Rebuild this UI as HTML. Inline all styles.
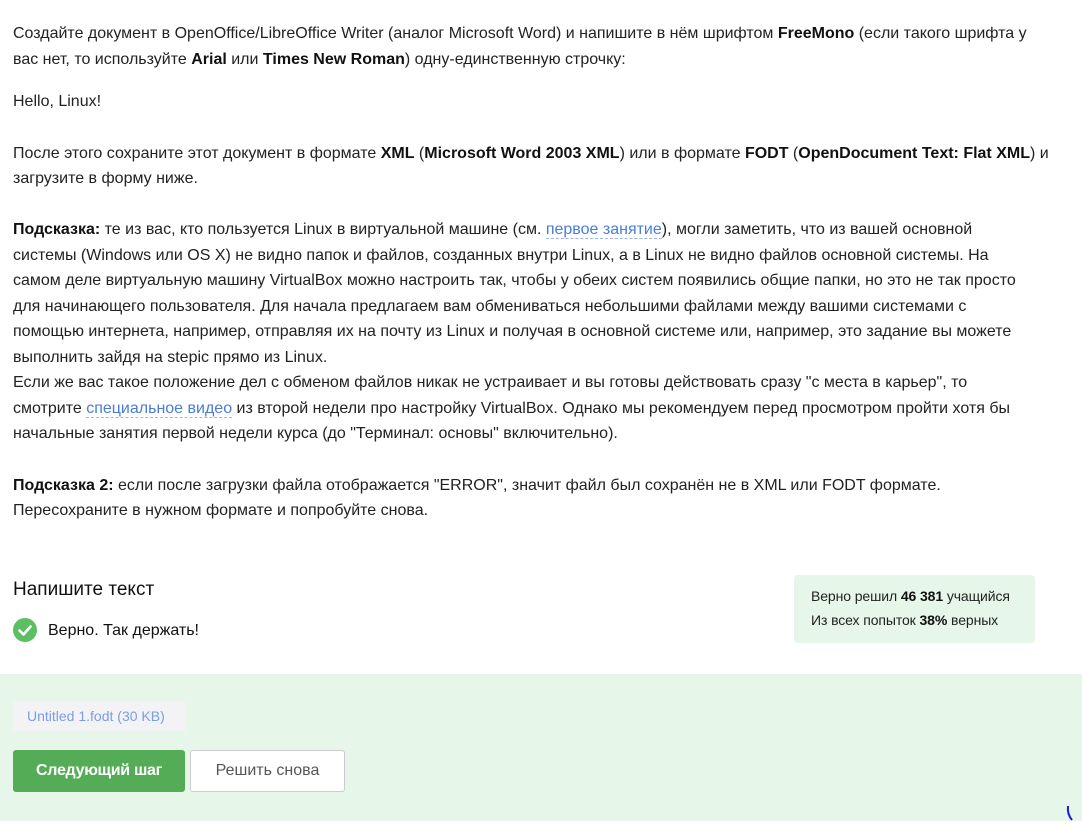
<!DOCTYPE html>
<html><head><meta charset="utf-8"><style>
body{margin:0;width:1082px;height:827px;background:#fff;font-family:"Liberation Sans",sans-serif;color:#222;overflow:hidden;position:relative}
.l{position:absolute;left:13px;font-size:16px;white-space:nowrap;letter-spacing:0;line-height:20px}
a{color:#4a7cd6;text-decoration:none;border-bottom:1px dashed #9bb6e6}
b{color:#111}
.panel{position:absolute;left:0;top:674px;width:1082px;height:147px;background:#e6f6e8}
.stat{position:absolute;left:794px;top:575px;width:241px;height:68px;background:#e6f6e8;border-radius:4px;font-size:14px;color:#222;letter-spacing:-0.1px}
.stat div{position:absolute;left:17px;white-space:nowrap}
</style></head><body>
<div class="l" style="top:24px">Создайте документ в OpenOffice/LibreOffice Writer (аналог Microsoft Word) и напишите в нём шрифтом <b>FreeMono</b> (если такого шрифта у</div>
<div class="l" style="top:50px">вас нет, то используйте <b>Arial</b> или <b>Times New Roman</b>) одну-единственную строчку:</div>
<div class="l" style="top:92px">Hello, Linux!</div>
<div class="l" style="top:144px">После этого сохраните этот документ в формате <b>XML</b> (<b>Microsoft Word 2003 XML</b>) или в формате <b>FODT</b> (<b>OpenDocument Text: Flat XML</b>) и</div>
<div class="l" style="top:169px">загрузите в форму ниже.</div>
<div class="l" style="top:220px"><b>Подсказка:</b> те из вас, кто пользуется Linux в виртуальной машине (см. <a>первое занятие</a>), могли заметить, что из вашей основной</div>
<div class="l" style="top:246px">системы (Windows или OS X) не видно папок и файлов, созданных внутри Linux, а в Linux не видно файлов основной системы. На</div>
<div class="l" style="top:271px">самом деле виртуальную машину VirtualBox можно настроить так, чтобы у обеих систем появились общие папки, но это не так просто</div>
<div class="l" style="top:297px">для начинающего пользователя. Для начала предлагаем вам обмениваться небольшими файлами между вашими системами с</div>
<div class="l" style="top:322px">помощью интернета, например, отправляя их на почту из Linux и получая в основной системе или, например, это задание вы можете</div>
<div class="l" style="top:348px">выполнить зайдя на stepic прямо из Linux.</div>
<div class="l" style="top:373px">Если же вас такое положение дел с обменом файлов никак не устраивает и вы готовы действовать сразу "с места в карьер", то</div>
<div class="l" style="top:399px">смотрите <a>специальное видео</a> из второй недели про настройку VirtualBox. Однако мы рекомендуем перед просмотром пройти хотя бы</div>
<div class="l" style="top:424px">начальные занятия первой недели курса (до "Терминал: основы" включительно).</div>
<div class="l" style="top:476px"><b>Подсказка 2:</b> если после загрузки файла отображается "ERROR", значит файл был сохранён не в XML или FODT формате.</div>
<div class="l" style="top:501px">Пересохраните в нужном формате и попробуйте снова.</div>
<div class="l" style="top:580px;font-size:19px;color:#111;letter-spacing:0">Напишите текст</div>
<svg style="position:absolute;left:13px;top:618px" width="24" height="24"><circle cx="12" cy="12" r="12" fill="#5cbf62"/><path d="M6.5 12.5l4 4 7-8" stroke="#fff" stroke-width="2.6" fill="none" stroke-linecap="round" stroke-linejoin="round"/></svg>
<div class="l" style="left:48px;top:621px;color:#111">Верно. Так держать!</div>
<div class="stat"><div style="top:13px">Верно решил <b>46 381</b> учащийся</div><div style="top:37px">Из всех попыток <b>38%</b> верных</div></div>
<div class="panel"></div>
<div style="position:absolute;left:13px;top:701px;width:173px;height:30px;background:#f3f3f5;border-radius:3px;color:#7a9de8;font-size:14px;line-height:30px;text-indent:14px">Untitled 1.fodt (30 KB)</div>
<div style="position:absolute;left:13px;top:750px;width:172px;height:42px;background:#54ad56;border-radius:3px;color:#fff;font-size:16px;font-weight:bold;line-height:42px;text-align:center;letter-spacing:-0.3px">Следующий шаг</div>
<div style="position:absolute;left:190px;top:750px;width:153px;height:40px;background:#fff;border:1px solid #ccc;border-radius:3px;color:#555;font-size:16px;line-height:40px;text-align:center">Решить снова</div>
<svg style="position:absolute;left:1064px;top:804px" width="18" height="23"><path d="M4 2 Q3 10 8 16" stroke="#1a1ae0" stroke-width="2" fill="none"/></svg>
</body></html>
